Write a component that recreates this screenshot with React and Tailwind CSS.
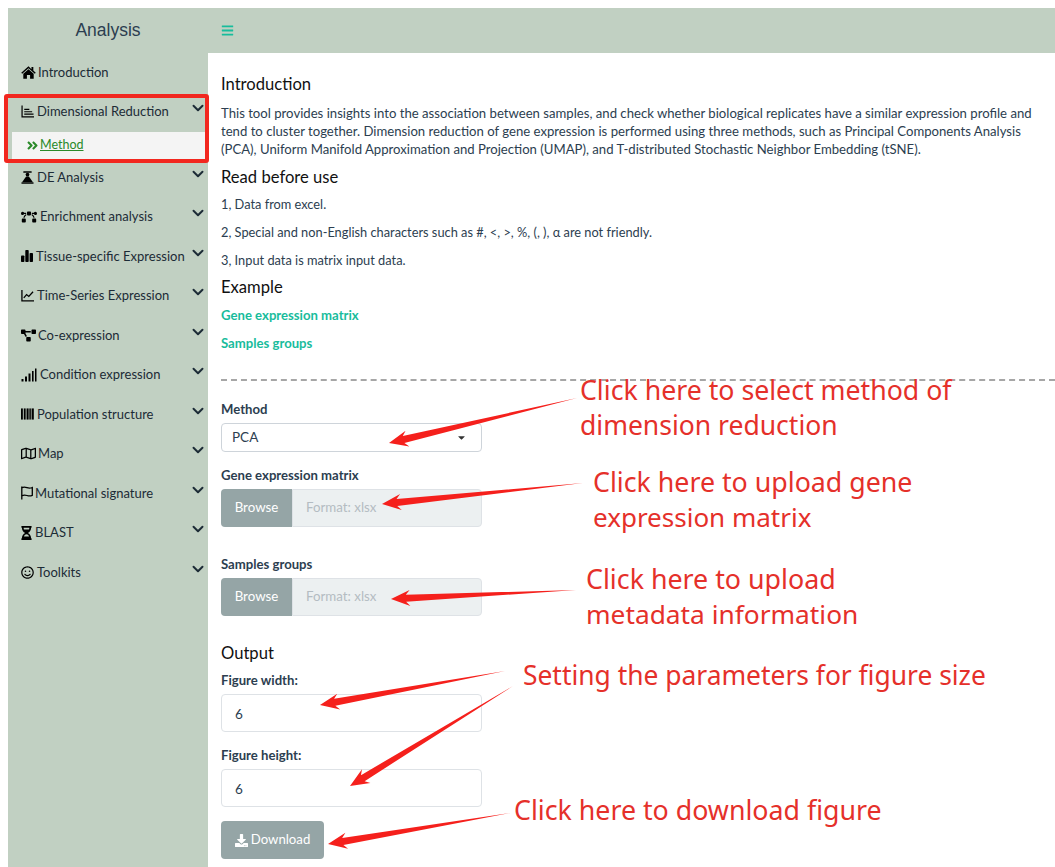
import { FaBezierCurve, FaProjectDiagram, FaRegMap, FaHourglassHalf, FaRegSmile, FaAngleDoubleRight, FaDownload, FaBars, FaCaretDown } from 'react-icons/fa';
import { ChevronDown } from 'lucide-react';

function IconHome({ className }) {
  return (
    <svg className={className} viewBox="0 0 16 14" fill="currentColor">
      <path d="M8 0.3 0.2 7.2l1 1.1L8 2.4l6.8 5.9 1-1.1-2.6-2.3V1.2h-2v2.2z" />
      <path d="M8 3.6 2.4 8.4v5.3h3.9V9.8h3.4v3.9h3.9V8.4z" />
    </svg>
  );
}

function IconAxisLines({ className }) {
  return (
    <svg className={className} viewBox="0 0 14 14" fill="currentColor">
      <path d="M0.5 0.5h1.3v11.7H14v1.3H0.5z" />
      <path d="M3.5 4h5.5v1.3H3.5zM3.5 6.6h8.5v1.3H3.5zM3.5 9.2h10v1.3H3.5z" />
    </svg>
  );
}

function IconBalance({ className }) {
  return (
    <svg className={className} viewBox="0 0 14 14" fill="currentColor">
      <rect x="2.5" y="0.2" width="9" height="1.8" rx="0.4" />
      <circle cx="7" cy="3.8" r="2" />
      <path d="M5.5 5.8h3l4.2 6H1.3z" />
      <rect x="0.5" y="12" width="13" height="1.8" rx="0.4" />
    </svg>
  );
}

function IconBars({ className }) {
  return (
    <svg className={className} viewBox="0 0 12 12" fill="currentColor">
      <rect x="0" y="5.5" width="3.4" height="6.5" rx="0.8" />
      <rect x="4.3" y="0" width="3.4" height="12" rx="0.8" />
      <rect x="8.6" y="3" width="3.4" height="9" rx="0.8" />
    </svg>
  );
}

function IconLineChart({ className }) {
  return (
    <svg className={className} viewBox="0 0 14 14" fill="none" stroke="currentColor">
      <path d="M1 1v11.8h13" strokeWidth="1.4" />
      <path d="M3 9.5 6 6l2.4 2 4.6-5" strokeWidth="1.4" />
    </svg>
  );
}

function IconSignal({ className }) {
  return (
    <svg className={className} viewBox="0 0 16 14" fill="currentColor">
      <rect x="0.5" y="11" width="2" height="2.5" />
      <rect x="4" y="8.5" width="2" height="5" />
      <rect x="7.5" y="5.5" width="2" height="8" />
      <rect x="11" y="3" width="1.6" height="10.5" />
      <rect x="14" y="0.5" width="1.5" height="13" />
    </svg>
  );
}

function IconBarcode({ className }) {
  return (
    <svg className={className} viewBox="0 0 14 14" fill="currentColor">
      <rect x="0" y="1" width="2" height="12" />
      <rect x="3" y="1" width="2" height="12" />
      <rect x="6" y="1" width="2.2" height="12" />
      <rect x="9" y="1" width="1.6" height="12" />
      <rect x="11.4" y="1" width="2.4" height="12" />
    </svg>
  );
}

function IconFlag({ className }) {
  return (
    <svg className={className} viewBox="0 0 12 14" fill="none" stroke="currentColor" strokeWidth="1.3">
      <path d="M0.8 0.5v13" />
      <path d="M0.8 1.6c2-.9 3.6-.6 5.2 0 1.6.6 3.4.6 5.3-.1v7.9c-2 .8-3.7.7-5.3.1-1.6-.6-3.2-.7-5.2.1" />
    </svg>
  );
}

const menu = [
  { label: 'Introduction', Icon: IconHome, size: 'w-[15px] h-[13px]', gap: 'ml-[2px]', pad: 'pb-0' },
  { label: 'Dimensional Reduction', Icon: IconAxisLines, size: 'w-[13px] h-[13px]', gap: 'ml-[3px]', caret: true, open: true },
  { label: 'DE Analysis', Icon: IconBalance, size: 'w-[13px] h-[13px]', gap: 'ml-[3px]', caret: true },
  { label: 'Enrichment analysis', Icon: FaBezierCurve, size: 'w-4 h-4', gap: 'ml-[3px]', caret: true },
  { label: 'Tissue-specific Expression', Icon: IconBars, size: 'w-[12px] h-[12px]', gap: 'ml-[3px]', caret: true },
  { label: 'Time-Series Expression', Icon: IconLineChart, size: 'w-[13px] h-[13px]', gap: 'ml-[3px]', caret: true },
  { label: 'Co-expression', Icon: FaProjectDiagram, size: 'w-[15px] h-[15px]', gap: 'ml-[2px]', caret: true },
  { label: 'Condition expression', Icon: IconSignal, size: 'w-4 h-[14px]', gap: 'ml-[3px]', caret: true },
  { label: 'Population structure', Icon: IconBarcode, size: 'w-[13px] h-[14px]', gap: 'ml-[3px]', caret: true },
  { label: 'Map', Icon: FaRegMap, size: 'w-[15px] h-[15px]', gap: 'ml-[2px]', caret: true },
  { label: 'Mutational signature', Icon: IconFlag, size: 'w-[12px] h-[14px]', gap: 'ml-[2px]', caret: true },
  { label: 'BLAST', Icon: FaHourglassHalf, size: 'w-[11px] h-[14px]', gap: 'ml-[3px]', caret: true },
  { label: 'Toolkits', Icon: FaRegSmile, size: 'w-[13px] h-[13px]', gap: 'ml-[3px]', caret: true },
];

function Sidebar() {
  return (
    <aside className="w-[200px] shrink-0 bg-[#c1d0c2] text-[13px] text-[#1c2b36]">
      {menu.map(({ label, Icon, size, gap, caret, open, pad = 'pb-[2px]' }) => (
        <div key={label}>
          <div className={`h-[39.5px] ${pad} pl-[13px] pr-[4px] flex items-center relative`}>
            <Icon className={`${size} shrink-0 text-black`} />
            <span className={`${gap} whitespace-nowrap`}>{label}</span>
            {caret && <ChevronDown className="absolute right-[1px] top-[6px] w-[18px] h-[18px]" strokeWidth={2.6} />}
          </div>
          {open && (
            <div className="h-[26.5px] ml-[4px] bg-[#f4f4f4] flex items-center pl-[14px] text-[12.5px] text-[#2a8a2a]">
              <FaAngleDoubleRight className="w-[13px] h-[13px] shrink-0" />
              <span className="ml-[1px] underline">Method</span>
            </div>
          )}
        </div>
      ))}
    </aside>
  );
}

function FieldLabel({ children }) {
  return <p className="text-[13.15px] font-bold leading-[20px] text-[#2c3e50]">{children}</p>;
}

function Heading({ children }) {
  return <h4 className="pt-[1px] -mb-[1px] text-[16.6px] leading-[24px] text-[#111]">{children}</h4>;
}

function FileInput({ label }) {
  return (
    <div>
      <FieldLabel>{label}</FieldLabel>
      <div className="mt-[4px] flex w-[261px] h-[38px] text-[13.3px]">
        <div className="w-[71px] pt-[1px] rounded-l-[4px] bg-[#95a5a6] text-white flex items-center justify-center">Browse</div>
        <div className="flex-1 pt-[1px] rounded-r-[4px] border border-[#dee2e6] bg-[#ecf0f1] pl-[13px] flex items-center text-[#b4bcc2]">Format: xlsx</div>
      </div>
    </div>
  );
}

function NumberInput({ label }) {
  return (
    <div>
      <FieldLabel>{label}</FieldLabel>
      <div className="mt-[4px] w-[261px] h-[38px] pt-[3px] rounded-[4px] border border-[#dee2e6] bg-white flex items-center pl-[13px] text-[13.5px] text-[#2c3e50]">6</div>
    </div>
  );
}

function Arrow({ from, tip, wing = 7 }) {
  // tapered hand-drawn arrow: thin tail, thick shaft, barbed head
  const [x1, y1] = from;
  const [x2, y2] = tip;
  const len = Math.hypot(x2 - x1, y2 - y1);
  const ux = (x2 - x1) / len;
  const uy = (y2 - y1) / len;
  const nx = -uy;
  const ny = ux;
  const pt = (along, off) => `${x2 - ux * along + nx * off},${y2 - uy * along + ny * off}`;
  const points = [
    `${x1},${y1}`,
    pt(15, wing * 0.5),
    pt(19, wing * 1.15),
    `${x2},${y2}`,
    pt(19, -wing * 1.15),
    pt(15, -wing * 0.5),
  ].join(' ');
  return <polygon points={points} fill="#f5201c" />;
}

const notes = [
  { text: 'Click here to select method of', pos: 'left-[580px] top-[372px] text-[26.7px]' },
  { text: 'dimension reduction', pos: 'left-[580px] top-[407px] text-[26.5px]' },
  { text: 'Click here to upload gene', pos: 'left-[593px] top-[464px] text-[26.75px]' },
  { text: 'expression matrix', pos: 'left-[593px] top-[499px] text-[26px]' },
  { text: 'Click here to upload', pos: 'left-[586px] top-[561px] text-[26.8px]' },
  { text: 'metadata information', pos: 'left-[586px] top-[596px] text-[26.3px]' },
  { text: 'Setting the parameters for figure size', pos: 'left-[523px] top-[657px] text-[26.4px]' },
  { text: 'Click here to download figure', pos: 'left-[514px] top-[792px] text-[26.75px]' },
];

export default function App() {
  return (
    <div className="relative w-[1055px] h-[867px] overflow-hidden bg-white pl-[8px] pt-[8px] font-['Lato','Noto_Sans',sans-serif]">
      <header className="h-[45px] flex bg-[#c1d0c2]">
        <div className="w-[200px] flex items-center justify-center text-[17.5px] text-[#2c3e50] font-['Liberation_Sans',sans-serif]">Analysis</div>
        <div className="flex items-center pl-[13px] text-[#18bc9c]">
          <FaBars className="w-[13px] h-[13px]" />
        </div>
      </header>
      <div className="flex h-[814px]">
        <Sidebar />
        <main className="flex-1 pl-[13px] pt-[18px] text-[#2c3e50]">
          <Heading>Introduction</Heading>
          <p className="mt-[9px] w-[820px] text-[13.15px] leading-[18px]">
            This tool provides insights into the association between samples, and check whether biological replicates have a similar expression profile and
            tend to cluster together. Dimension reduction of gene expression is performed using three methods, such as Principal Components Analysis
            (PCA), Uniform Manifold Approximation and Projection (UMAP), and T-distributed Stochastic Neighbor Embedding (tSNE).
          </p>
          <div className="mt-[5.5px]"><Heading>Read before use</Heading></div>
          <p className="mt-[6px] text-[12.8px] leading-[20px]">1, Data from excel.</p>
          <p className="mt-[8px] text-[12.8px] leading-[20px]">2, Special and non-English characters such as #, &lt;, &gt;, %, (, ), α are not friendly.</p>
          <p className="mt-[8px] text-[12.8px] leading-[20px]">3, Input data is matrix input data.</p>
          <div className="mt-[4px]"><Heading>Example</Heading></div>
          <p className="mt-[7px] text-[13.15px] leading-[20px] font-bold text-[#18bc9c]">Gene expression matrix</p>
          <p className="mt-[8px] text-[13.15px] leading-[20px] font-bold text-[#18bc9c]">Samples groups</p>
          <div className="mt-[26px] border-t-2 border-dashed border-[#a6a6a6]" />
          <div className="mt-[18px]"><FieldLabel>Method</FieldLabel></div>
          <div className="mt-[4px] w-[261px] h-[29px] pt-[1px] rounded-[4px] border border-[#ced4da] bg-white flex items-center justify-between pl-[10px] pr-[14px] text-[13.5px]">
            PCA
            <FaCaretDown className="w-[11px] h-[11px] text-[#333]" />
          </div>
          <div className="mt-[13px]"><FileInput label="Gene expression matrix" /></div>
          <div className="mt-[27px]"><FileInput label="Samples groups" /></div>
          <h4 className="mt-[25px] text-[16.6px] leading-[24px] text-[#111]">Output</h4>
          <div className="mt-[5px]"><NumberInput label="Figure width:" /></div>
          <div className="mt-[13px]"><NumberInput label="Figure height:" /></div>
          <div className="mt-[14px] w-[103px] h-[38px] pt-[1px] rounded-[4px] bg-[#95a5a6] text-white text-[13.2px] flex items-center justify-center">
            <FaDownload className="w-[13px] h-[13px] mr-[3px]" />
            Download
          </div>
        </main>
      </div>

      {/* annotations pasted on top of the screenshot */}
      <div className="absolute left-[4px] top-[94px] w-[205px] h-[69px] rounded-[3px] border-[4px] border-[#f2271f]" />
      {notes.map(n => (
        <div key={n.text} className={`absolute ${n.pos} leading-[36px] whitespace-nowrap text-[#e5302a] font-['Noto_Sans',sans-serif]`}>{n.text}</div>
      ))}
      <svg className="absolute left-0 top-0 w-[1055px] h-[867px] pointer-events-none" viewBox="0 0 1055 867">
        <Arrow from={[577, 398]} tip={[389, 443]} />
        <Arrow from={[583, 483]} tip={[382, 504]} />
        <Arrow from={[576, 590]} tip={[391, 599]} />
        <Arrow from={[505, 671]} tip={[320, 705]} />
        <Arrow from={[513, 686]} tip={[350, 786]} />
        <Arrow from={[510, 813]} tip={[328, 844]} />
      </svg>
    </div>
  );
}
